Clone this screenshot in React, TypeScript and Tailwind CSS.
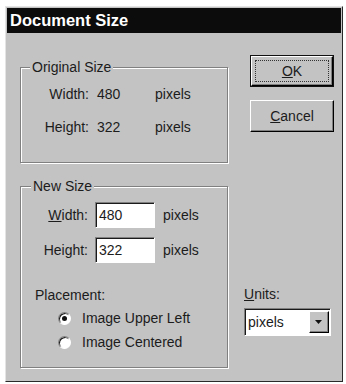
import React from 'react';

const Sunken = 'border border-t-[#808080] border-l-[#808080] border-r-white border-b-white shadow-[inset_1px_1px_0_#1a1a1a]';

function Group({ title, titleLeft, className, children }: { title: string; titleLeft: string; className: string; children: React.ReactNode }) {
  return (
    <div className={`relative border border-[#808080] shadow-[inset_1px_1px_0_#fff,1px_1px_0_#fff] ${className}`}>
      <span className={`absolute top-[-10px] ${titleLeft} bg-[#c3c3c3] px-[2px] leading-[18px]`}>{title}</span>
      {children}
    </div>
  );
}

function Radio({ checked, label }: { checked?: boolean; label: string }) {
  return (
    <div className="flex h-[24px] items-center">
      <div className={`ml-[37px] flex h-[13px] w-[13px] items-center justify-center rounded-full bg-white ${Sunken}`}>
        {checked && <div className="h-[5px] w-[5px] rounded-full bg-[#111]" />}
      </div>
      <span className="ml-[11px]">{label}</span>
    </div>
  );
}

export default function App() {
  return (
    <div className="h-[384px] w-[346px] bg-white pl-[5px] pt-[6px] font-['Liberation_Sans',Arial,sans-serif] text-[14px] text-[#1c1c1c]">
      <div className="h-[376px] w-[338px] border border-t-[#e4e4e4] border-l-[#e4e4e4] border-r-[#2a2a2a] border-b-[#2a2a2a] bg-[#c3c3c3] p-[1px]">
        {/* title bar */}
        <div className="flex h-[25px] items-center bg-[#0c0c0c] pl-[3px] text-[16.5px] font-bold text-white">
          Document Size
        </div>

        <div className="flex">
          {/* left column */}
          <div className="ml-[13px] pt-[34px]">
            <Group title="Original Size" titleLeft="left-[9px]" className="h-[96px] w-[208px]">
              <div className="pt-[17px]">
                <div className="flex h-[18px] items-center">
                  <span className="w-[68px] text-right">Width:</span>
                  <span className="ml-[8px] w-[58px]">480</span>
                  <span>pixels</span>
                </div>
                <div className="mt-[15px] flex h-[18px] items-center">
                  <span className="w-[68px] text-right">Height:</span>
                  <span className="ml-[8px] w-[58px]">322</span>
                  <span>pixels</span>
                </div>
              </div>
            </Group>

            <Group title="New Size" titleLeft="left-[10px]" className="mt-[23px] h-[182px] w-[208px]">
              <div className="pt-[15px]">
                <div className="flex items-center">
                  <span className="w-[67px] text-right"><u>W</u>idth:</span>
                  <div className={`ml-[7px] flex h-[26px] w-[60px] items-center bg-white pl-[3px] ${Sunken}`}>480</div>
                  <span className="ml-[8px]">pixels</span>
                </div>
                <div className="mt-[9px] flex items-center">
                  <span className="w-[67px] text-right">Height:</span>
                  <div className={`ml-[7px] flex h-[26px] w-[60px] items-center bg-white pl-[3px] ${Sunken}`}>322</div>
                  <span className="ml-[8px]">pixels</span>
                </div>
                <div className="ml-[14px] mt-[23px] leading-[18px]">Placement:</div>
                <div className="mt-[2px]">
                  <Radio checked label="Image Upper Left" />
                  <Radio label="Image Centered" />
                </div>
              </div>
            </Group>
          </div>

          {/* right column */}
          <div className="ml-[16px] flex flex-col pt-[22px]">
            <div className="ml-[6px] w-[84px] border border-[#111]">
              <div className="flex h-[30px] items-center justify-center border border-t-white border-l-white border-r-black border-b-black p-[3px] shadow-[inset_-1px_-1px_0_#808080]">
                <div className="flex h-full w-full items-center justify-center border border-dotted border-[#333]">
                  <span><u>O</u>K</span>
                </div>
              </div>
            </div>
            <div className="ml-[6px] mt-[13px] flex h-[32px] w-[84px] items-center justify-center border border-t-white border-l-white border-r-black border-b-black shadow-[inset_-1px_-1px_0_#808080]">
              <span><u>C</u>ancel</span>
            </div>

            <div className="mt-[153px] leading-[18px]"><u>U</u>nits:</div>
            <div className={`mt-[5px] flex h-[28px] w-[87px] items-center bg-white ${Sunken}`}>
              <span className="flex-1 pl-[3px]">pixels</span>
              <div className="mr-[1px] flex h-[22px] w-[20px] items-center justify-center border border-t-white border-l-white border-r-black border-b-black bg-[#c3c3c3] shadow-[inset_-1px_-1px_0_#808080]">
                <svg width="8" height="5" viewBox="0 0 8 5">
                  <path d="M0 0h7L3.5 4z" fill="#111" />
                </svg>
              </div>
            </div>
          </div>
        </div>
      </div>
    </div>
  );
}
